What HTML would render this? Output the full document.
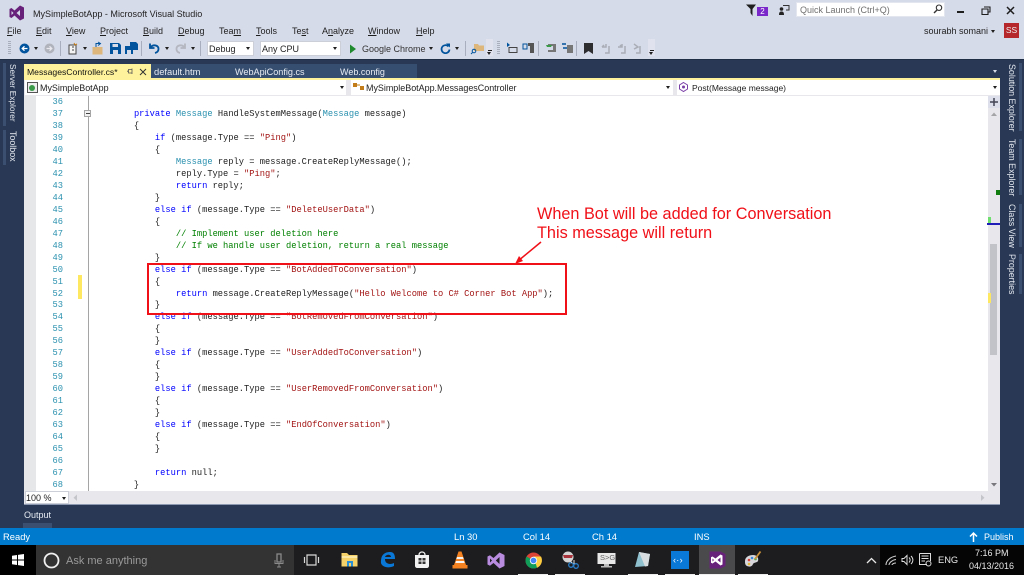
<!DOCTYPE html>
<html><head><meta charset="utf-8"><style>
html,body{margin:0;padding:0}
body{width:1024px;height:575px;overflow:hidden;position:relative;background:#d6dbe9;font-family:"Liberation Sans",sans-serif;font-size:9px;color:#1e1e1e}
.a{position:absolute}
.t{position:absolute;white-space:nowrap;line-height:12px}
u{text-decoration:underline}
.v{position:absolute;writing-mode:vertical-rl;white-space:nowrap;color:#e4e8f0;font-size:8.9px;line-height:12px}
pre{position:absolute;margin:0;font-family:"Liberation Mono",monospace;font-size:8.74px;line-height:11.97px;color:#1e1e1e}
.k{color:#0000ff}.y{color:#2b91af}.s{color:#a31515}.c{color:#008000}
.cb{position:absolute;background:#fff;border:1px solid #ccced8;box-sizing:border-box}
.ar{position:absolute;width:0;height:0;border-left:2.5px solid transparent;border-right:2.5px solid transparent;border-top:3px solid #1e1e1e}
.sep{position:absolute;width:1px;height:15px;top:41px;background:#a8aebd}
svg{position:absolute;overflow:visible}
</style></head><body>

<svg style="left:9px;top:5px" width="16" height="16" viewBox="0 0 16 16"><path d="M11 0.5L15 2.5V13.5L11 15.5L5.5 10.5L2.5 13L0.5 12V4L2.5 3L5.5 5.5ZM11 5L7.5 8L11 11Z M2.5 6V10L4.5 8Z" fill="#68217a" fill-rule="evenodd"/></svg>
<div class="t" style="left:33px;top:8px;font-size:9.05px;color:#222">MySimpleBotApp - Microsoft Visual Studio</div>

<div class="t" style="left:7px;top:25px"><u>F</u>ile</div>
<div class="t" style="left:36px;top:25px"><u>E</u>dit</div>
<div class="t" style="left:66px;top:25px"><u>V</u>iew</div>
<div class="t" style="left:100px;top:25px"><u>P</u>roject</div>
<div class="t" style="left:143px;top:25px"><u>B</u>uild</div>
<div class="t" style="left:178px;top:25px"><u>D</u>ebug</div>
<div class="t" style="left:219px;top:25px">Tea<u>m</u></div>
<div class="t" style="left:256px;top:25px"><u>T</u>ools</div>
<div class="t" style="left:292px;top:25px">Te<u>s</u>t</div>
<div class="t" style="left:322px;top:25px">A<u>n</u>alyze</div>
<div class="t" style="left:368px;top:25px"><u>W</u>indow</div>
<div class="t" style="left:416px;top:25px"><u>H</u>elp</div>

<!-- top right -->
<svg style="left:746px;top:4px" width="12" height="12"><path d="M0 0.5H10L6.5 5V12L4.5 9V5Z" fill="#1e1e1e"/></svg>
<div class="a" style="left:757px;top:7px;width:11px;height:9px;background:#7a28c9;color:#fff;font-size:8px;line-height:9px;text-align:center">2</div>
<svg style="left:778px;top:4px" width="12" height="12"><circle cx="3.5" cy="5" r="1.8" fill="#222"/><path d="M1 11C1 8 2 7.5 3.5 7.5S6 8 6 11Z" fill="#222"/><path d="M5 1.5H11V6H8" fill="none" stroke="#333"/></svg>
<div class="a" style="left:796px;top:2px;width:149px;height:15px;background:#fff;border:1px solid #e4e6ef;box-sizing:border-box"></div>
<div class="t" style="left:800px;top:4px;color:#717171">Quick Launch (Ctrl+Q)</div>
<svg style="left:933px;top:4px" width="10" height="10"><circle cx="6" cy="3.7" r="2.7" fill="none" stroke="#333" stroke-width="1.1"/><path d="M4 6L1 9" stroke="#333" stroke-width="1.4"/></svg>
<div class="a" style="left:957px;top:11px;width:7px;height:2px;background:#1e1e1e"></div>
<svg style="left:981px;top:6px" width="10" height="9"><path d="M3 1H9V6H7M1 3H7V8.5H1Z" fill="none" stroke="#1e1e1e" stroke-width="1.1"/></svg>
<svg style="left:1006px;top:6px" width="9" height="9"><path d="M1 1L8 8M8 1L1 8" stroke="#1e1e1e" stroke-width="1.5"/></svg>
<div class="t" style="left:924px;top:25px">sourabh somani</div>
<div class="ar" style="left:991px;top:30px"></div>
<div class="a" style="left:1004px;top:23px;width:15px;height:15px;background:#b4262a;color:#eee;font-size:8.5px;line-height:15px;text-align:center">SS</div>

<!-- toolbar -->
<div class="a" style="left:8px;top:41px;width:3px;height:14px;background:repeating-linear-gradient(#a9aebd 0 1px,#d6dbe9 1px 2px)"></div>
<svg style="left:19px;top:43px" width="11" height="11"><circle cx="5.5" cy="5.5" r="5" fill="#00539c"/><path d="M8.5 5.5H3.5M5.5 3.3L3.2 5.5L5.5 7.7" stroke="#fff" fill="none" stroke-width="1.3"/></svg>
<div class="ar" style="left:34px;top:47px"></div>
<svg style="left:44px;top:43px" width="11" height="11"><circle cx="5.5" cy="5.5" r="5" fill="#b0b3bb"/><path d="M2.5 5.5H7.5M5.5 3.3L7.8 5.5L5.5 7.7" stroke="#e8e8ee" fill="none" stroke-width="1.3"/></svg>
<div class="sep" style="left:60px"></div>
<svg style="left:67px;top:42px" width="12" height="13"><path d="M2 3H9V12H2Z" fill="#f4f4f4" stroke="#444"/><path d="M5 5H7M5 8H7" stroke="#444"/><path d="M7 1L8 3L10 2" stroke="#c27d1a" fill="none"/></svg>
<div class="ar" style="left:83px;top:47px"></div>
<svg style="left:92px;top:42px" width="12" height="13"><path d="M0.5 5H10.5V12.5H0.5Z" fill="#dcb67a"/><path d="M4 5V1.5H8M6 0L8.5 1.5L6 3.5" stroke="#00539c" fill="none"/></svg>
<svg style="left:110px;top:43px" width="11" height="11"><path d="M0 0H9L11 2V11H0Z" fill="#00539c"/><path d="M2.5 1H8V4H2.5ZM3 7H8V11H3Z" fill="#d6dbe9"/></svg>
<svg style="left:125px;top:42px" width="13" height="12"><path d="M5 0H11L13 2V8H5Z" fill="#00539c"/><path d="M0 4H7L8 5V12H0Z" fill="#00539c"/><path d="M2 8H6V12H2Z" fill="#d6dbe9"/></svg>
<div class="sep" style="left:141px"></div>
<svg style="left:148px;top:42px" width="12" height="12"><path d="M2 1.5V6H6.5M2.5 5.5C5 2 10.5 3 10.5 7C10.5 9 9 10.5 7 11" fill="none" stroke="#00539c" stroke-width="1.8"/></svg>
<div class="ar" style="left:165px;top:47px"></div>
<svg style="left:175px;top:42px" width="12" height="12"><path d="M10 1.5V6H5.5M9.5 5.5C7 2 1.5 3 1.5 7C1.5 9 3 10.5 5 11" fill="none" stroke="#b4b7c0" stroke-width="1.8"/></svg>
<div class="ar" style="left:191px;top:47px"></div>
<div class="sep" style="left:200px"></div>
<div class="cb" style="left:207px;top:41px;width:47px;height:15px"></div>
<div class="t" style="left:209px;top:43px">Debug</div>
<div class="ar" style="left:246px;top:47px"></div>
<div class="cb" style="left:260px;top:41px;width:81px;height:15px"></div>
<div class="t" style="left:262px;top:43px">Any CPU</div>
<div class="ar" style="left:333px;top:47px"></div>
<svg style="left:349px;top:44px" width="8" height="10"><path d="M1 0.5L7 5L1 9.5Z" fill="#1f8a2e"/></svg>
<div class="t" style="left:362px;top:43px;color:#333">Google Chrome</div>
<div class="ar" style="left:429px;top:47px"></div>
<svg style="left:440px;top:43px" width="11" height="12"><path d="M8.5 3.5A4 4 0 1 0 9.5 6.5" fill="none" stroke="#00539c" stroke-width="1.7"/><path d="M6 0.5H10V4.5Z" fill="#00539c"/></svg>
<div class="ar" style="left:455px;top:47px"></div>
<div class="sep" style="left:465px"></div>
<svg style="left:471px;top:43px" width="13" height="12"><path d="M3 1H7L8 2.5H13V8H3Z" fill="#dcb67a"/><circle cx="3" cy="8" r="1.8" fill="none" stroke="#00539c"/><path d="M1.5 9.5L0 11" stroke="#00539c"/></svg>
<div class="a" style="left:486px;top:39px;width:7px;height:17px;background:#e0e3ee"></div>
<div class="a" style="left:487.5px;top:50px;width:4px;height:1px;background:#222"></div>
<div class="ar" style="left:487px;top:52px"></div>
<div class="a" style="left:497px;top:41px;width:3px;height:14px;background:repeating-linear-gradient(#a9aebd 0 1px,#d6dbe9 1px 2px)"></div>
<svg style="left:506px;top:42px" width="12" height="13"><path d="M1 0.5V5L4 3Z" fill="#00539c"/><path d="M3 5.5H11V10.5H3Z" fill="none" stroke="#444"/></svg>
<svg style="left:522px;top:42px" width="13" height="12"><path d="M1 2H5V7H1Z" fill="none" stroke="#00539c"/><path d="M6 1H12V11H8V4H6Z" fill="#555"/></svg>
<div class="sep" style="left:538px"></div>
<svg style="left:545px;top:43px" width="12" height="10"><path d="M3 1H11V9H3V7H8V3H3Z" fill="#777"/><path d="M1 2H7L6 4H2Z" fill="#3a9a4a"/></svg>
<svg style="left:561px;top:42px" width="13" height="12"><path d="M6 3H12V11H6Z" fill="#777"/><path d="M1 2H5M2 6H6" stroke="#00539c" stroke-width="1.5"/></svg>
<div class="sep" style="left:576px"></div>
<svg style="left:584px;top:43px" width="9" height="11"><path d="M0 0H9V11L4.5 8L0 11Z" fill="#2d2d30"/></svg>
<svg style="left:601px;top:43px" width="11" height="11"><path d="M5 1V4H1M1 4L3 2M8 3V10H4" fill="none" stroke="#a9adb6" stroke-width="1.5"/></svg>
<svg style="left:617px;top:43px" width="11" height="11"><path d="M1 4H5V1M5 4L3 2M8 3V10H4" fill="none" stroke="#a9adb6" stroke-width="1.5"/></svg>
<svg style="left:633px;top:43px" width="11" height="11"><path d="M1 1L5 4L1 6M7 3V10H3" fill="none" stroke="#a9adb6" stroke-width="1.5"/></svg>
<div class="a" style="left:648px;top:39px;width:7px;height:17px;background:#e0e3ee"></div>
<div class="a" style="left:649.5px;top:50px;width:4px;height:1px;background:#222"></div>
<div class="ar" style="left:649px;top:52px"></div>

<!-- dark main -->
<div class="a" style="left:0;top:59px;width:1024px;height:469px;background:#293955"></div>
<div class="a" style="left:0;top:59px;width:1024px;height:1px;background:#1f2d45"></div>
<div class="a" style="left:3px;top:63px;width:3px;height:63px;background:#3b5070"></div>
<div class="a" style="left:3px;top:130px;width:3px;height:35px;background:#3b5070"></div>
<div class="a" style="left:1019px;top:63px;width:3px;height:68px;background:#3b5070"></div>
<div class="a" style="left:1019px;top:139px;width:3px;height:56px;background:#3b5070"></div>
<div class="a" style="left:1019px;top:204px;width:3px;height:43px;background:#3b5070"></div>
<div class="a" style="left:1019px;top:254px;width:3px;height:40px;background:#3b5070"></div>
<div class="v" style="left:7px;top:64px;font-size:8.3px">Server Explorer</div>
<div class="v" style="left:7px;top:131px;font-size:8.9px">Toolbox</div>
<div class="v" style="left:1006px;top:64px">Solution Explorer</div>
<div class="v" style="left:1006px;top:139px">Team Explorer</div>
<div class="v" style="left:1006px;top:204px">Class View</div>
<div class="v" style="left:1006px;top:254px">Properties</div>

<!-- tabs -->
<div class="a" style="left:150px;top:64px;width:267px;height:14px;background:#364e6f"></div>
<div class="a" style="left:24px;top:64px;width:127px;height:15px;background:#fff29d"></div>
<div class="t" style="left:27px;top:66px;color:#111;font-size:8.65px">MessagesController.cs*</div>
<svg style="left:127px;top:68px" width="7" height="7"><path d="M1.5 1.5H5V5H1.5ZM0 3.2H1.5M5 0.5V6" fill="none" stroke="#555" stroke-width="0.8"/></svg>
<svg style="left:139px;top:68px" width="8" height="8"><path d="M1 1L7 7M7 1L1 7" stroke="#333" stroke-width="1"/></svg>
<div class="t" style="left:154px;top:66px;color:#e8ecf4;font-size:9.4px">default.htm</div>
<div class="t" style="left:235px;top:66px;color:#e8ecf4;font-size:9.1px">WebApiConfig.cs</div>
<div class="t" style="left:340px;top:66px;color:#e8ecf4">Web.config</div>
<div class="ar" style="left:993px;top:70px;border-top-color:#d8dde8"></div>

<!-- editor frame -->
<div class="a" style="left:24px;top:78px;width:976px;height:2px;background:#fff29d"></div>
<div class="a" style="left:24px;top:80px;width:976px;height:425px;background:#e8e8ec"></div>
<div class="a" style="left:25px;top:80px;width:321px;height:15px;background:#fff"></div>
<div class="a" style="left:351px;top:80px;width:322px;height:15px;background:#fff"></div>
<div class="a" style="left:677px;top:80px;width:323px;height:15px;background:#fff"></div>
<svg style="left:27px;top:82px" width="11" height="11"><path d="M0.5 0.5H10.5V10.5H0.5Z" fill="#eee" stroke="#555"/><circle cx="5" cy="6" r="3" fill="#3a9a4a"/></svg>
<div class="t" style="left:40px;top:82px;font-size:8.95px">MySimpleBotApp</div>
<div class="ar" style="left:340px;top:86px"></div>
<svg style="left:353px;top:81px" width="12" height="12"><path d="M0 2H4V6H0ZM7 5H11V9H7Z" fill="#c27d1a"/><path d="M4 4H7" stroke="#c27d1a"/></svg>
<div class="t" style="left:366px;top:82px;font-size:8.95px">MySimpleBotApp.MessagesController</div>
<div class="ar" style="left:666px;top:86px"></div>
<svg style="left:679px;top:82px" width="10" height="10"><path d="M4.5 0.5L8.5 3V7L4.5 9.5L0.5 7V3Z" fill="#fff" stroke="#7b3fa8"/><circle cx="4.5" cy="5" r="1.5" fill="#7b3fa8"/></svg>
<div class="t" style="left:692px;top:82px;font-size:8.5px">Post(Message message)</div>
<div class="ar" style="left:993px;top:86px"></div>

<!-- code bg -->
<div class="a" style="left:24px;top:96px;width:12px;height:395px;background:#e6e7e8"></div>
<div class="a" style="left:36px;top:96px;width:952px;height:395px;background:#fff"></div>
<div class="a" style="left:88px;top:96px;width:1px;height:395px;background:#a5a5a5"></div>
<div class="a" style="left:84px;top:110px;width:7px;height:7px;background:#f2f2f2;border:1px solid #a5a5a5;box-sizing:border-box"></div>
<div class="a" style="left:85.5px;top:113px;width:4px;height:1px;background:#444"></div>
<div class="a" style="left:78px;top:275px;width:4px;height:24px;background:#fee761"></div>

<pre style="left:36px;top:97px;width:27px;text-align:right;color:#2b91af">36
37
38
39
40
41
42
43
44
45
46
47
48
49
50
51
52
53
54
55
56
57
58
59
60
61
62
63
64
65
66
67
68</pre>
<pre style="left:92px;top:97px">

        <span class="k">private</span> <span class="y">Message</span> HandleSystemMessage(<span class="y">Message</span> message)
        {
            <span class="k">if</span> (message.Type == <span class="s">"Ping"</span>)
            {
                <span class="y">Message</span> reply = message.CreateReplyMessage();
                reply.Type = <span class="s">"Ping"</span>;
                <span class="k">return</span> reply;
            }
            <span class="k">else if</span> (message.Type == <span class="s">"DeleteUserData"</span>)
            {
                <span class="c">// Implement user deletion here</span>
                <span class="c">// If we handle user deletion, return a real message</span>
            }
            <span class="k">else if</span> (message.Type == <span class="s">"BotAddedToConversation"</span>)
            {
                <span class="k">return</span> message.CreateReplyMessage(<span class="s">"Hello Welcome to C# Corner Bot App"</span>);
            }
            <span class="k">else if</span> (message.Type == <span class="s">"BotRemovedFromConversation"</span>)
            {
            }
            <span class="k">else if</span> (message.Type == <span class="s">"UserAddedToConversation"</span>)
            {
            }
            <span class="k">else if</span> (message.Type == <span class="s">"UserRemovedFromConversation"</span>)
            {
            }
            <span class="k">else if</span> (message.Type == <span class="s">"EndOfConversation"</span>)
            {
            }

            <span class="k">return</span> null;
        }</pre>

<!-- annotations -->
<div class="a" style="left:147px;top:263px;width:420px;height:52px;border:2px solid #f01018;box-sizing:border-box"></div>
<div class="t" style="left:537px;top:205px;font-size:16.25px;line-height:19px;color:#f01018">When Bot will be added for Conversation<br>This message will return</div>
<svg style="left:510px;top:235px" width="50" height="35"><path d="M31 7L8 26" stroke="#f01018" stroke-width="1.5"/><path d="M5 29L9 21L13 26Z" fill="#f01018"/></svg>

<!-- right scrollbar -->
<div class="a" style="left:988px;top:96px;width:12px;height:395px;background:#e8e8ec"></div>
<div class="a" style="left:988px;top:96px;width:12px;height:12px;background:#dde0ea"></div>
<svg style="left:989px;top:97px" width="10" height="10"><path d="M5 1V9M1 5H9" stroke="#445" stroke-width="1.5"/></svg>
<svg style="left:990px;top:112px" width="8" height="6"><path d="M4 0.5L7 4H1Z" fill="#a5a5a8"/></svg>
<div class="a" style="left:990px;top:244px;width:7px;height:111px;background:#c2c3c9"></div>
<div class="a" style="left:996px;top:190px;width:4px;height:5px;background:#107c10"></div>
<div class="a" style="left:988px;top:217px;width:3px;height:6px;background:#6fe06f"></div>
<div class="a" style="left:987px;top:223px;width:13px;height:2px;background:#1f1fb8"></div>
<div class="a" style="left:988px;top:293px;width:3px;height:10px;background:#fee761"></div>
<svg style="left:990px;top:482px" width="8" height="6"><path d="M1 1H7L4 4.5Z" fill="#77777c"/></svg>

<!-- bottom bar -->
<div class="a" style="left:25px;top:491px;width:44px;height:13px;background:#fff;border:1px solid #ccced8;box-sizing:border-box"></div>
<div class="t" style="left:26px;top:492px;font-size:9px">100 %</div>
<div class="ar" style="left:62px;top:497px"></div>
<svg style="left:73px;top:494px" width="5" height="8"><path d="M4 0.5V7L0.5 3.8Z" fill="#c4c5ca"/></svg>
<svg style="left:980px;top:494px" width="5" height="8"><path d="M1 0.5V7L4.5 3.8Z" fill="#c4c5ca"/></svg>
<div class="a" style="left:24px;top:504px;width:976px;height:1px;background:#8d99b0"></div>
<div class="t" style="left:24px;top:509px;color:#e8ecf4">Output</div>
<div class="a" style="left:23px;top:523px;width:29px;height:5px;background:#3b5070"></div>

<!-- status -->
<div class="a" style="left:0;top:528px;width:1024px;height:17px;background:#007acc"></div>
<div class="t" style="left:3px;top:530.5px;color:#fff;font-size:9.4px">Ready</div>
<div class="t" style="left:454px;top:530.5px;color:#fff;font-size:9.4px">Ln 30</div>
<div class="t" style="left:523px;top:530.5px;color:#fff;font-size:9.4px">Col 14</div>
<div class="t" style="left:592px;top:530.5px;color:#fff;font-size:9.4px">Ch 14</div>
<div class="t" style="left:694px;top:530.5px;color:#fff;font-size:9.4px">INS</div>
<svg style="left:969px;top:532px" width="9" height="10"><path d="M4.5 1V10M1 4.5L4.5 1L8 4.5" fill="none" stroke="#fff" stroke-width="1.5"/></svg>
<div class="t" style="left:984px;top:530.5px;color:#fff">Publish</div>

<!-- taskbar -->
<div class="a" style="left:0;top:545px;width:1024px;height:30px;background:#1d1d1f"></div>
<div class="a" style="left:0;top:545px;width:36px;height:30px;background:#000"></div>
<svg style="left:12px;top:554px" width="12" height="12"><path d="M0 1.8L5 1V5.5H0ZM6 0.9L12 0V5.5H6ZM0 6.5H5V11L0 10.2ZM6 6.5H12V12L6 11.1Z" fill="#fff"/></svg>
<div class="a" style="left:36px;top:545px;width:258px;height:30px;background:#333"></div>
<svg style="left:43px;top:552px" width="17" height="17"><circle cx="8.5" cy="8.5" r="7" fill="none" stroke="#f0f0f0" stroke-width="1.8"/></svg>
<div class="t" style="left:66px;top:555px;font-size:11px;color:#9a9a9a">Ask me anything</div>
<svg style="left:274px;top:553px" width="10" height="15"><path d="M3 1H7V9H3Z" fill="none" stroke="#8a8a8a" stroke-width="1.3"/><path d="M1 7V10.5H9V7M5 11V14M3 14H7" fill="none" stroke="#8a8a8a"/></svg>
<svg style="left:303px;top:554px" width="17" height="12"><path d="M4 1H13V11H4ZM1.5 3V9M15.5 3V9" fill="none" stroke="#d8d8d8" stroke-width="1.2"/></svg>
<svg style="left:341px;top:552px" width="17" height="15"><path d="M0.5 1H6L8 3H16.5V14.5H0.5Z" fill="#f6d36a"/><path d="M0.5 4H16.5V6H0.5Z" fill="#fbe7a5"/><path d="M6 9H12V14.5H10V11H8V14.5H6Z" fill="#2b8fd6"/></svg>
<svg style="left:379px;top:551px" width="16" height="17"><path d="M2 10C2 3 7 1 11 1C15 1 16 4 16 8H6C6 13 11 14 15 12V15C9 18 1 16 2 10ZM6 6H12C12 3 7 3 6 6Z" fill="#0a78d7" fill-rule="evenodd"/></svg>
<svg style="left:414px;top:550px" width="16" height="19"><path d="M1 5H15V16C15 17 14 18 13 18H3C2 18 1 17 1 16Z" fill="#f2f2f2"/><path d="M5 5C5 1 11 1 11 5" fill="none" stroke="#f2f2f2" stroke-width="1.3"/><path d="M4.5 8H7.5V10.5H4.5ZM8.5 8H11.5V10.5H8.5ZM4.5 11.5H7.5V14H4.5ZM8.5 11.5H11.5V14H8.5Z" fill="#333"/></svg>
<svg style="left:452px;top:551px" width="16" height="18"><path d="M6.5 0.5H9.5L14 14H2Z" fill="#f58220"/><path d="M5 6H11L11.6 8H4.4ZM4 10H12L12.6 12H3.4Z" fill="#f4f4f4"/><path d="M0.5 14H15.5V17.5H0.5Z" fill="#f58220"/></svg>
<svg style="left:487px;top:552px" width="18" height="17"><path d="M12.5 0.5L17.5 3V14L12.5 16.5L6.5 11L3 13.8L0.5 12.5V4.5L3 3.2L6.5 6ZM12.5 5L8.8 8.5L12.5 12Z M3 6.5V10.5L5 8.5Z" fill="#b98ce0" fill-rule="evenodd"/></svg>
<svg style="left:525px;top:552px" width="17" height="17" viewBox="0 0 17 17"><circle cx="8.5" cy="8.5" r="8" fill="#db4437"/><path d="M8.5 8.5L15.4 12.5A8 8 0 0 1 5 15.7Z" fill="#0f9d58"/><path d="M8.5 8.5L5 15.7A8 8 0 0 1 1.6 4.5Z" fill="#0f9d58"/><path d="M8.5 4.5H16A8 8 0 0 1 12 15.7Z" fill="#ffcd40"/><circle cx="8.5" cy="8.5" r="3.7" fill="#fff"/><circle cx="8.5" cy="8.5" r="2.9" fill="#4285f4"/></svg>
<svg style="left:561px;top:551px" width="18" height="19"><circle cx="7" cy="6" r="5.5" fill="#d4d4d4"/><path d="M2 4H12L11 7H3Z" fill="#a8333a"/><circle cx="10" cy="14" r="2.3" fill="none" stroke="#2a7fc9" stroke-width="1.3"/><circle cx="15" cy="15" r="2.3" fill="none" stroke="#2a7fc9" stroke-width="1.3"/><path d="M8 8L11 12M13 9L13 13" stroke="#ddd"/></svg>
<svg style="left:597px;top:552px" width="19" height="17"><path d="M0.5 1H18.5V12H0.5Z" fill="#e8e8e8"/><path d="M7 12H12V14H7ZM4 14H15V15.5H4Z" fill="#bbb"/></svg>
<div class="t" style="left:600px;top:552px;font-size:7.5px;color:#666">S&gt;G</div>
<svg style="left:634px;top:551px" width="17" height="18"><path d="M5 1L16 3L14 15L1 16Z" fill="#8fc1cf"/><path d="M5 1L16 3L14 15L11 15.5Z" fill="#d8dde0"/></svg>
<div class="a" style="left:671px;top:551px;width:18px;height:18px;background:#0a78d7"></div>
<div class="t" style="left:673px;top:554px;font-size:9px;color:#fff;letter-spacing:.3px">‹·›</div>
<div class="a" style="left:699px;top:545px;width:36px;height:30px;background:#4a4a4c"></div>
<svg style="left:708px;top:551px" width="18" height="18"><path d="M12.5 0.5L17.5 3V15L12.5 17.5H1.5V0.5Z" fill="#68217a"/><path d="M12.5 3.5L14.5 4.5V13.5L12.5 14.5L7.5 10.5L4.5 12.5L3 11.8V6.2L4.5 5.5L7.5 7.5ZM12.5 6.5L9.5 9L12.5 11.5Z M4.5 7.5V10.5L6 9Z" fill="#fff" fill-rule="evenodd"/></svg>
<svg style="left:744px;top:551px" width="18" height="18"><path d="M1 10C1 6 5 4 9 4C13 4 15 7 14 10C13 12 10 11 9 13C8 16 5 16 3 15C1 14 1 12 1 10Z" fill="#d8d8dc"/><circle cx="5" cy="9" r="1.3" fill="#d9433c"/><circle cx="8" cy="7" r="1.3" fill="#3b8ad9"/><circle cx="11.5" cy="8" r="1.3" fill="#4caf50"/><circle cx="5" cy="13" r="1.3" fill="#e5b93b"/><path d="M11 8L16.5 0.5" stroke="#c9903a" stroke-width="1.8"/></svg>
<div class="a" style="left:518px;top:574px;width:30px;height:1px;background:#eee"></div>
<div class="a" style="left:555px;top:574px;width:30px;height:1px;background:#eee"></div>
<div class="a" style="left:628px;top:574px;width:30px;height:1px;background:#eee"></div>
<div class="a" style="left:665px;top:574px;width:30px;height:1px;background:#eee"></div>
<div class="a" style="left:699px;top:574px;width:36px;height:1px;background:#eee"></div>
<div class="a" style="left:738px;top:574px;width:30px;height:1px;background:#eee"></div>
<svg style="left:866px;top:557px" width="11" height="7"><path d="M1 6L5.5 1.5L10 6" fill="none" stroke="#e8e8e8" stroke-width="1.3"/></svg>
<div class="a" style="left:880px;top:545px;width:144px;height:30px;background:#050505"></div>
<svg style="left:885px;top:555px" width="13" height="11"><path d="M1 10C1 6 5 2 11 1M4 10C4 8 7 5 11 4.5M7 10C7 9 9 8 11 8" fill="none" stroke="#ccc" stroke-width="1.1"/></svg>
<svg style="left:901px;top:554px" width="13" height="12"><path d="M1 4.5H3L6 1.5V10.5L3 7.5H1Z" fill="none" stroke="#ddd"/><path d="M8 3.5C9.5 5 9.5 7 8 8.5M10 2C12.5 4.5 12.5 7.5 10 10" fill="none" stroke="#ddd"/></svg>
<svg style="left:919px;top:553px" width="13" height="14"><path d="M0.5 0.5H11.5V8M8 11.5H0.5V0.5" fill="none" stroke="#ddd"/><path d="M2.5 3H9.5M2.5 5.5H9.5M2.5 8H6" stroke="#ddd"/><circle cx="9.5" cy="10.5" r="2.5" fill="none" stroke="#ddd"/></svg>
<div class="t" style="left:938px;top:554px;font-size:9.3px;color:#e8e8e8">ENG</div>
<div class="t" style="left:975px;top:547px;width:32px;text-align:center;font-size:9px;color:#e8e8e8;line-height:13px">7:16 PM</div>
<div class="t" style="left:969px;top:560px;font-size:9px;color:#e8e8e8;line-height:13px">04/13/2016</div>
</body></html>
